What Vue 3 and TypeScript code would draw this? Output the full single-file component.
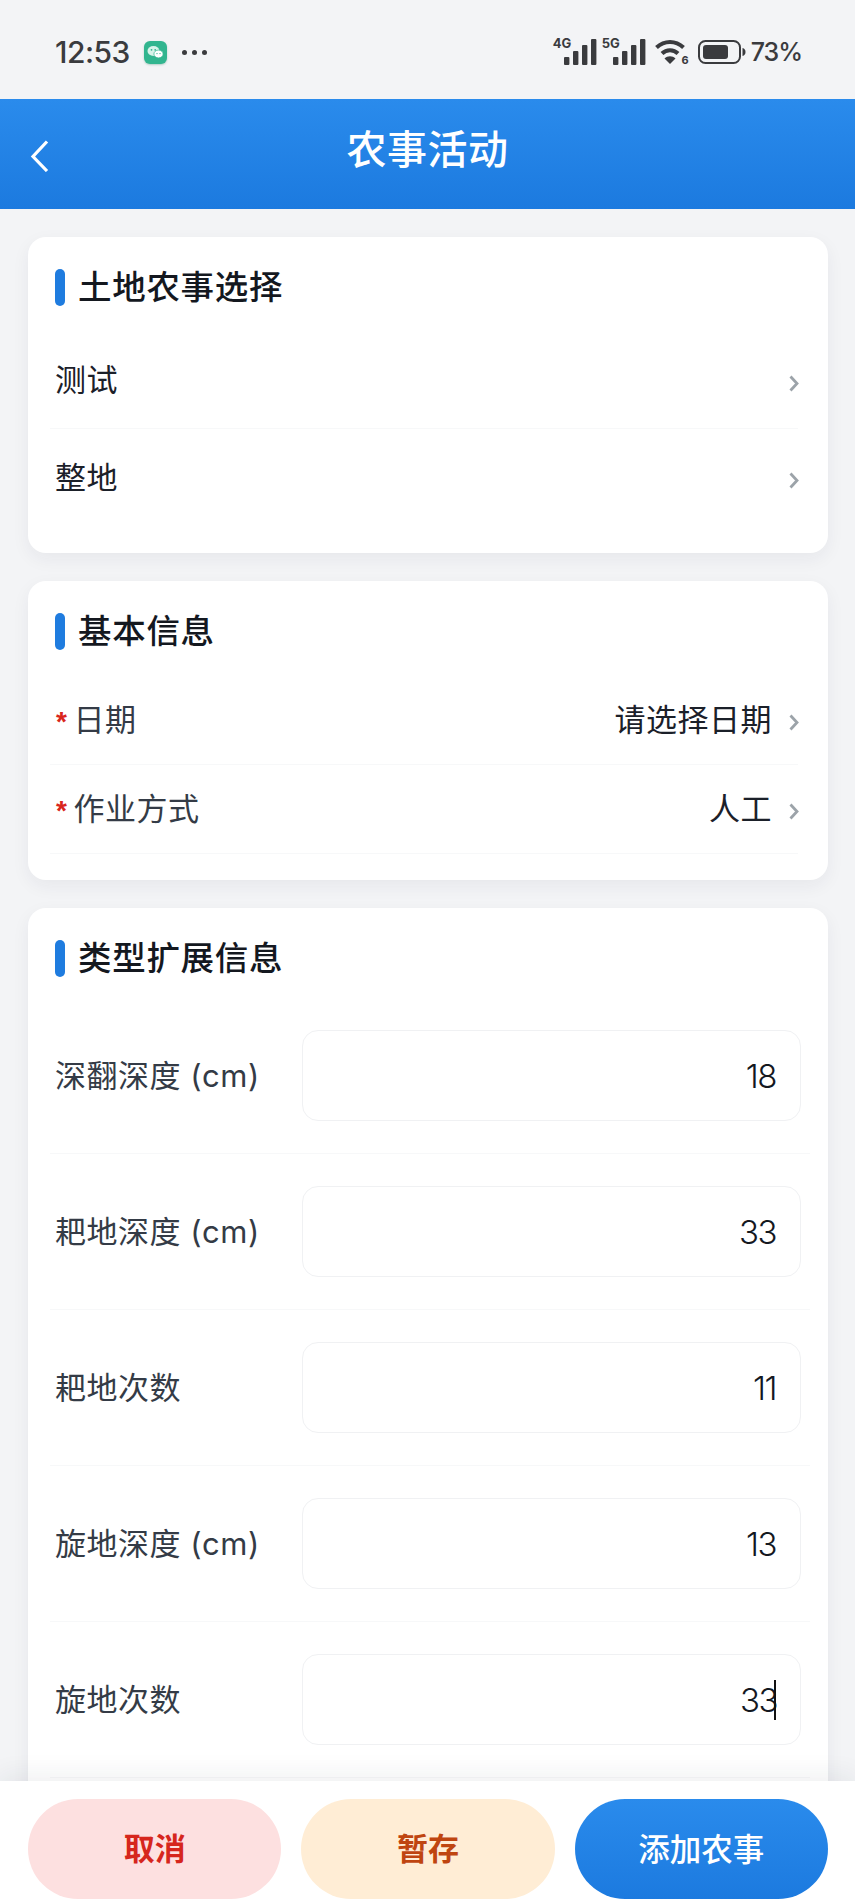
<script setup lang="ts">
interface PickRow { label: string; value?: string; required?: boolean }
interface InputRow { label: string; value: string; caret?: boolean }

const landRows: PickRow[] = [{ label: '测试' }, { label: '整地' }]
const baseRows: PickRow[] = [
  { label: '日期', value: '请选择日期', required: true },
  { label: '作业方式', value: '人工', required: true },
]
const inputRows: InputRow[] = [
  { label: '深翻深度 (cm)', value: '18' },
  { label: '耙地深度 (cm)', value: '33' },
  { label: '耙地次数', value: '11' },
  { label: '旋地深度 (cm)', value: '13' },
  { label: '旋地次数', value: '33', caret: true },
]
</script>

<template>
  <div class="page">
    <div class="status">
      <div class="status-left">
        <span class="time">12:53</span>
        <span class="wechat">
          <svg width="23" height="23" viewBox="0 0 23 23">
            <ellipse cx="9.5" cy="10" rx="6" ry="5" fill="#d8f3ea" />
            <ellipse cx="14.5" cy="13" rx="4.6" ry="3.9" fill="#fff" stroke="#31b58f" stroke-width=".7" />
            <circle cx="7.5" cy="8.8" r=".9" fill="#31b58f" />
            <circle cx="11.2" cy="8.8" r=".9" fill="#31b58f" />
            <circle cx="13" cy="12.6" r=".7" fill="#31b58f" />
            <circle cx="16" cy="12.6" r=".7" fill="#31b58f" />
          </svg>
        </span>
        <span class="dots"><i></i><i></i><i></i></span>
      </div>
      <div class="status-right">
        <span class="signal">
          <b>4G</b>
          <svg width="33" height="26" viewBox="0 0 33 26" fill="#3a3b3e">
            <rect x="0" y="18" width="5.4" height="8" rx="1" />
            <rect x="9" y="12" width="5.4" height="14" rx="1" />
            <rect x="18" y="6" width="5.4" height="20" rx="1" />
            <rect x="27" y="0" width="5.4" height="26" rx="1" />
          </svg>
        </span>
        <span class="signal">
          <b>5G</b>
          <svg width="33" height="26" viewBox="0 0 33 26" fill="#3a3b3e">
            <rect x="0" y="18" width="5.4" height="8" rx="1" />
            <rect x="9" y="12" width="5.4" height="14" rx="1" />
            <rect x="18" y="6" width="5.4" height="20" rx="1" />
            <rect x="27" y="0" width="5.4" height="26" rx="1" />
          </svg>
        </span>
        <span class="wifi">
          <svg width="34" height="26" viewBox="0 0 34 26" fill="none" stroke="#3a3b3e" stroke-width="4">
            <path d="M1.500 8.500C9.500 1 20.500 1 28.500 8.500" />
            <path d="M7 14.500C11.500 10 18.500 10 23 14.500" />
            <path d="M15 25l-5.500-5.500c3-3 8-3 11 0z" fill="#3a3b3e" stroke="none" />
          </svg>
          <em>6</em>
        </span>
        <svg class="battery" width="48" height="24" viewBox="0 0 48 24">
          <rect x="1" y="1" width="41" height="22" rx="6.500" fill="none" stroke="#3a3b3e" stroke-width="2" />
          <rect x="5" y="5" width="25" height="14" rx="3" fill="#3a3b3e" />
          <path d="M44.500 8c2 .5 3 2 3 4s-1 3.500-3 4z" fill="#3a3b3e" />
        </svg>
        <span class="percent">73%</span>
      </div>
    </div>

    <header class="nav">
      <svg class="back" width="19" height="32" viewBox="0 0 19 32" fill="none" stroke="#fff" stroke-width="3.200">
        <path d="M17 1.500L3 16.500L17 31" />
      </svg>
      <h1>农事活动</h1>
    </header>

    <main class="content">
      <section class="card card-land">
        <h2 class="title"><span>土地农事选择</span></h2>
        <div v-for="row in landRows" :key="row.label" class="row land-row">
          <span class="label dark">{{ row.label }}</span>
          <svg class="chev" width="10" height="17" viewBox="0 0 10 17" fill="none" stroke="#9ca3a9" stroke-width="2.800">
            <path d="M1.500 1.500L8 8.500L1.500 15.500" />
          </svg>
        </div>
      </section>

      <section class="card card-base">
        <h2 class="title"><span>基本信息</span></h2>
        <div v-for="row in baseRows" :key="row.label" class="row base-row">
          <span class="label"><i v-if="row.required" class="star">*</i>{{ row.label }}</span>
          <span class="value">{{ row.value }}</span>
          <svg class="chev" width="10" height="17" viewBox="0 0 10 17" fill="none" stroke="#9ca3a9" stroke-width="2.800">
            <path d="M1.500 1.500L8 8.500L1.500 15.500" />
          </svg>
        </div>
      </section>

      <section class="card card-ext">
        <h2 class="title"><span>类型扩展信息</span></h2>
        <div v-for="row in inputRows" :key="row.label" class="row input-row">
          <span class="label">{{ row.label }}</span>
          <div class="input">
            <span>{{ row.value }}</span><i v-if="row.caret" class="caret"></i>
          </div>
        </div>
      </section>
    </main>

    <footer class="bar">
      <button class="btn cancel">取消</button>
      <button class="btn draft">暂存</button>
      <button class="btn add">添加农事</button>
    </footer>
  </div>
</template>

<style scoped>
.page {
  width: 855px;
  height: 1900px;
  display: flex;
  flex-direction: column;
  overflow: hidden;
  background: #f3f4f6;
  font-family: "Noto Sans CJK SC", "Noto Sans", sans-serif;
  color: #1b2029;
}
.status {
  height: 99px;
  flex: none;
  box-sizing: border-box;
  padding: 5px 53px 0 55px;
  display: flex;
  align-items: center;
  justify-content: space-between;
  color: #3a3b3e;
}
.status-left, .status-right { display: flex; align-items: center; }
.time {
  font-family: Inter, Roboto, sans-serif;
  font-size: 30px;
  font-weight: 550;
  letter-spacing: -0.5px;
  width: 89px;
}
.wechat {
  width: 23px;
  height: 23px;
  border-radius: 6px;
  background: #31b58f;
  box-shadow: 0 1px 2px rgba(30, 120, 90, .3);
  display: block;
}
.wechat svg { display: block; }
.dots { display: flex; gap: 5px; margin-left: 15px; }
.dots i { width: 5px; height: 5px; border-radius: 50%; background: #3a3b3e; }
.signal { position: relative; display: block; width: 44px; height: 26px; margin-right: 5px; text-align: right; }
.signal svg { position: absolute; right: 0; top: 0; }
.signal b {
  position: absolute;
  left: 0;
  top: -3px;
  font: 700 13px/14px Inter, Roboto, sans-serif;
  color: #3a3b3e;
}
.wifi { position: relative; display: block; width: 34px; height: 26px; margin-left: 4px; }
.wifi svg { display: block; }
.wifi em {
  position: absolute;
  right: 0;
  bottom: -1px;
  font: 700 11px/12px Inter, Roboto, sans-serif;
  color: #3a3b3e;
}
.battery { margin-left: 9px; display: block; }
.percent {
  margin-left: 5px;
  font-family: Inter, Roboto, sans-serif;
  font-size: 25px;
  font-weight: 500;
  letter-spacing: -1px;
}

.nav {
  height: 110px;
  flex: none;
  box-sizing: border-box;
  display: flex;
  align-items: center;
  justify-content: center;
  position: relative;
  background: linear-gradient(180deg, #2a8bec, #1c7adf);
}
.nav h1 {
  margin: 0 0 14px;
  color: #fff;
  font-size: 40px;
  font-weight: 500;
  line-height: 52px;
  letter-spacing: .5px;
}
.back { position: absolute; left: 30px; top: 41px; }

.content {
  flex: 1;
  min-height: 0;
  overflow: hidden;
  box-sizing: border-box;
  padding: 28px 27px 0 28px;
  display: flex;
  flex-direction: column;
  gap: 28px;
}
.card {
  flex: none;
  background: #fff;
  border-radius: 18px;
  box-shadow: 0 6px 18px rgba(30, 40, 60, .06);
  box-sizing: border-box;
  padding: 28px 22px;
}
.title {
  margin: 0;
  height: 44px;
  display: flex;
  align-items: center;
  gap: 13px;
  font-size: 33.500px;
  font-weight: 500;
  line-height: 38px;
  letter-spacing: .7px;
  color: #14181f;
}
.title span { margin-bottom: 5px; }
.title::before {
  content: "";
  width: 10px;
  height: 37px;
  margin-left: 5px;
  border-radius: 5px;
  background: #1f7cdf;
}
.row {
  display: flex;
  align-items: center;
  box-sizing: border-box;
  padding: 0 0 0 5px;
  border-bottom: 1px solid #f7f8f9;
}
.label {
  font-family: Inter, "Noto Sans CJK SC", sans-serif;
  font-size: 31px;
  color: #343b46;
  letter-spacing: .5px;
  white-space: nowrap;
  margin-bottom: 5px;
}
.label.dark { color: #1b2029; }
.star {
  font-style: normal;
  color: #d9261c;
  font-size: 28px;
  font-weight: 600;
  margin: 0 6px 0 1px;
  font-family: "Liberation Sans", sans-serif;
}
.value { margin-left: auto; margin-bottom: 5px; font-size: 31px; color: #1b2029; letter-spacing: .5px; }
.chev { flex: none; margin-left: 17px; margin-right: -1px; margin-top: 5px; }

.card-land .title { margin-bottom: 24px; }
.land-row { height: 96px; justify-content: space-between; margin-right: 8px; }
.land-row:first-of-type .label { margin-bottom: 7px; }
.land-row:last-child { border-bottom-color: transparent; }
.land-row:last-child .label { margin-bottom: 3px; }
.land-row:last-child .chev { margin-top: 7px; }

.card-base { padding-bottom: 26px; }
.card-base .title { margin-bottom: 23px; }
.base-row { height: 89px; margin-right: 8px; }

.card-ext { padding-right: 18px; }
.card-ext .title { margin-bottom: 18px; }
.input-row { height: 156px; padding-right: 9px; }
.input-row .label { width: 247px; flex: none; }
.input {
  flex: 1;
  height: 91px;
  box-sizing: border-box;
  border: 1px solid #f0f1f3;
  border-radius: 16px;
  background: #fff;
  padding: 0 24px;
  display: flex;
  align-items: center;
  justify-content: flex-end;
  font-family: Inter, "Noto Sans", sans-serif;
  font-size: 33px;
  font-weight: 300;
  letter-spacing: -1.500px;
  color: #14181f;
}
.caret {
  width: 2px;
  height: 40px;
  background: #111;
  margin-left: -3px;
}

.bar {
  flex: none;
  height: 119px;
  box-sizing: border-box;
  padding: 18px 27px 1px 28px;
  display: flex;
  gap: 20px;
  background: #fff;
  box-shadow: 0 -6px 24px rgba(30, 40, 60, .07);
  position: relative;
}
.btn {
  flex: 1;
  border: 0;
  border-radius: 50px;
  font-family: inherit;
  font-size: 31px;
  font-weight: 600;
  padding: 0 0 5px;
}
.cancel { background: #fde0e0; color: #d6261d; }
.draft { background: #ffedd5; color: #bf4510; }
.add { background: linear-gradient(180deg, #2a8bec, #1c7adf); color: #fff; font-weight: 500; font-size: 31.500px; }
</style>
